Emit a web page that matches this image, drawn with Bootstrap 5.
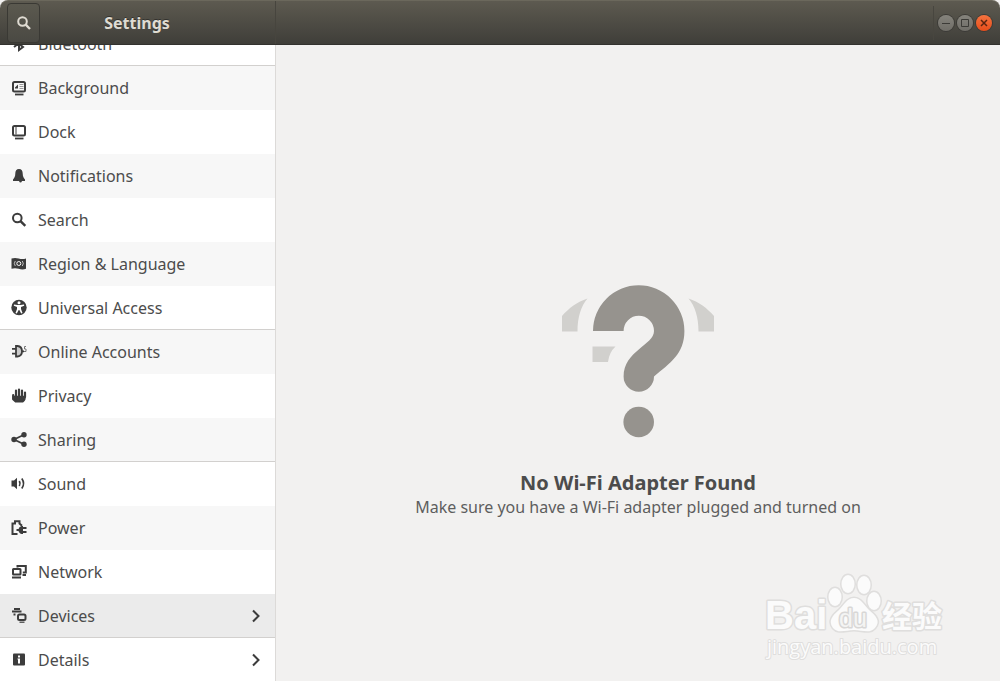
<!DOCTYPE html>
<html lang="en">
<head>
<meta charset="utf-8">
<meta name="viewport" content="width=device-width, initial-scale=1">
<title>Settings</title>
<link href="https://cdn.jsdelivr.net/npm/bootstrap@5.3.0/dist/css/bootstrap.min.css" rel="stylesheet">
<style>
body { font-family: "Noto Sans", "Open Sans", sans-serif; font-size: 16px; background: #f2f1f0; color: #4c4c4c; }
.titlebar { height: 45px; background: linear-gradient(#5d5a50, #3f3e39); border-top: 1px solid #6b685c; border-bottom: 1px solid #33322e; border-radius: 8px 8px 0 0; }
.titlebar-side { width: 276px; border-right: 1px solid #47453e; }
.titlebar h1 { font-size: 16px; line-height: 24px; font-weight: 700; color: #dfdbd2; text-shadow: 0 -1px #33322e; }
.find-btn { width: 33px; height: 40px; margin-left: 7px; border: 1px solid #3a3934; border-radius: 4px; background: linear-gradient(#5b594f, #4a4943); color: #dfdbd2; }
.title-space { margin-right: 41px; }
.win-controls { height: 34px; gap: 3px; border-left: 1px solid #48463f; }
.win-btn { width: 16px; height: 16px; border-radius: 50%; border: 0; background: linear-gradient(#85837c, #6f6d67); box-shadow: 0 0 0 1px #3c3b37; color: #3c3b37; }
.win-close { background: linear-gradient(#f5733f, #e64d1b); color: #5a2411; }
.sidebar { width: 276px; background: #fff; border-right: 1px solid #dcdad8; }
.side-list { margin-top: -23px; }
.side-item { height: 44px; padding: 0 13px 0 10px; gap: 10px; color: #4c4c4c; font-size: 16px; line-height: 24px; text-decoration: none; border-bottom: 1px solid transparent; }
.side-item svg { color: #3c3c3c; }
.side-item.shade { background: #f7f7f7; }
.side-item.selected { background: #ebebeb; }
.side-item.rule { border-bottom-color: #d2d0ce; }
.empty-state { padding-top: 78px; }
.empty-state h2 { font-size: 20px; line-height: 24px; font-weight: 700; margin-top: 33px; color: #4c4c4c; }
.empty-state p { line-height: 24px; color: #5e5e5e; }
.watermark { right: 48px; bottom: 14px; }
</style>
</head>
<body class="vh-100 d-flex flex-column overflow-hidden">
<header class="titlebar d-flex align-items-center flex-shrink-0">
  <div class="titlebar-side h-100 d-flex align-items-center">
    <button class="find-btn p-0 d-flex align-items-center justify-content-center" type="button" aria-label="Search">
      <svg width="16" height="16" viewBox="0 0 16 16" fill="none" stroke="currentColor" stroke-width="2"><circle cx="6.5" cy="6.5" r="4.3"/><path d="M9.7 9.7 14 14" stroke-width="2.4"/></svg>
    </button>
    <h1 class="title-space flex-grow-1 text-center mb-0">Settings</h1>
  </div>
  <div class="win-controls ms-auto d-flex align-items-center ps-1 pe-2">
    <button class="win-btn p-0 d-flex" type="button" aria-label="Minimize"><svg width="16" height="16" viewBox="0 0 16 16" stroke="currentColor"><path d="M4 8.5h8"/></svg></button>
    <button class="win-btn p-0 d-flex" type="button" aria-label="Maximize"><svg width="16" height="16" viewBox="0 0 16 16" fill="none" stroke="currentColor"><path d="M4.500 4.500h7v7h-7z"/></svg></button>
    <button class="win-btn win-close p-0 d-flex" type="button" aria-label="Close"><svg width="16" height="16" viewBox="0 0 16 16" stroke="currentColor" stroke-width="1.500"><path d="m5 5 6 6m0-6-6 6"/></svg></button>
  </div>
</header>
<div class="d-flex flex-grow-1 overflow-hidden">
  <nav class="sidebar flex-shrink-0 overflow-hidden" aria-label="Settings panels">
    <div class="side-list d-flex flex-column">
      <a href="#" class="side-item rule d-flex align-items-center"><svg width="18" height="18" viewBox="0 0 18 18" fill="none" stroke="currentColor" stroke-width="2"><path d="m4 5 9 7-4 3V2l4 3-9 7"/></svg>Bluetooth</a>
      <a href="#" class="side-item shade d-flex align-items-center"><svg width="18" height="18" viewBox="0 0 18 18" fill="none" stroke="currentColor"><rect x="3" y="3" width="12" height="9.500" rx="1.500" stroke-width="2"/><path d="M5 15.500h8.500" stroke-width="1.800"/><path d="M9.500 5.500h4m-4 2h4m-4 2h4" stroke="#999"/><path d="M5 8.500 8 5.500v4H5z" fill="currentColor" stroke="none"/></svg>Background</a>
      <a href="#" class="side-item d-flex align-items-center"><svg width="18" height="18" viewBox="0 0 18 18" fill="none" stroke="currentColor"><rect x="3" y="3" width="12" height="9.500" rx="1.500" stroke-width="2"/><path d="M5 15.500h8.500" stroke-width="1.800"/><path d="M6 4v7.500"/></svg>Dock</a>
      <a href="#" class="side-item shade d-flex align-items-center"><svg width="18" height="18" viewBox="0 0 18 18" fill="currentColor"><path d="M9 2c-2.600 0-3.700 2-3.700 4.500C5.300 10 4 11 3 12.500V14h12v-1.500c-1-1.500-2.300-2.500-2.300-6C12.700 4 11.600 2 9 2z"/><path d="M9 14h3q-.5 1.500-1.500 1.500T9 14z"/></svg>Notifications</a>
      <a href="#" class="side-item d-flex align-items-center"><svg width="18" height="18" viewBox="0 0 18 18" fill="none" stroke="currentColor" stroke-width="2"><circle cx="7.300" cy="7" r="4.300"/><path d="m10.500 10.200 4.800 4.600" stroke-width="2.500"/></svg>Search</a>
      <a href="#" class="side-item shade d-flex align-items-center"><svg width="18" height="18" viewBox="0 0 18 18" fill="currentColor"><path d="M1.500 3.500q3.500-1.200 7.200 0t7.300 0v10.300q-3.500 1.200-7.300 0t-7.200 0z"/><g fill="none" stroke="#f7f7f7"><circle cx="8.800" cy="8.500" r="2"/><path d="M5.300 6q-2 2.500 0 5m7-5q2 2.500 0 5" stroke-width=".7"/></g></svg>Region &amp; Language</a>
      <a href="#" class="side-item rule d-flex align-items-center"><svg width="18" height="18" viewBox="0 0 18 18"><circle cx="9" cy="8.500" r="7.700" fill="currentColor"/><circle cx="9" cy="3.700" r="1.500" fill="#fff"/><path d="m4 5.500 3.500.6h3l3.500-.6.200 1.300-3.200 1.200v2l1.500 4-1.300.6L9.300 11h-.6l-1.900 3.600-1.300-.6L7 10V8L3.800 6.800z" fill="#fff"/></svg>Universal Access</a>
      <a href="#" class="side-item shade d-flex align-items-center"><svg width="18" height="18" viewBox="0 0 18 18" fill="none" stroke="currentColor"><path d="M6 3h1.500q4.500.5 4.500 5.300t-4.500 5.200H6z" fill="#ccc" stroke-width="1.800"/><path d="M2 5.800h4M2 10.700h4M12 8.300h2" stroke-width="1.800"/><path d="M16 3.500h-1.500V6H16v2.500h-2" stroke="#777"/></svg>Online Accounts</a>
      <a href="#" class="side-item d-flex align-items-center"><svg width="18" height="18" viewBox="0 0 18 18" fill="none" stroke="currentColor" stroke-width="2.200" stroke-linecap="round"><path d="M6 3.500V9M9 2.500V9m3-5.500V9m3-3.500V10M3.200 8v4"/><path d="M3.200 9.500h11.700V12q-1 2.500-2 2.700H5.500l-2.300-2z" fill="currentColor" stroke-width="1.500"/></svg>Privacy</a>
      <a href="#" class="side-item shade rule d-flex align-items-center"><svg width="18" height="18" viewBox="0 0 18 18" fill="currentColor"><circle cx="4" cy="8.500" r="2.700"/><circle cx="14" cy="3.700" r="2.700"/><circle cx="14" cy="13.300" r="2.700"/><path d="m14 3.700-10 4.800 10 4.800" fill="none" stroke="currentColor" stroke-width="1.800"/></svg>Sharing</a>
      <a href="#" class="side-item d-flex align-items-center"><svg width="18" height="18" viewBox="0 0 18 18" fill="currentColor"><path d="M1.500 5.500H4l3-2.800v11.600l-3-2.800H1.500z"/><path d="M9.300 6q1.500 2.500 0 5m2.500-7.500q3.500 5 0 10" fill="none" stroke="currentColor" stroke-width="1.700"/></svg>Sound</a>
      <a href="#" class="side-item shade d-flex align-items-center"><svg width="18" height="18" viewBox="0 0 18 18" fill="none" stroke="currentColor" stroke-width="2"><path d="M7.500 15h-5V4.500H5V2.300h4.500v2.200l2.500 2.200"/><path d="M13 7v8h-1.500Q8.500 14 8.500 11t3-4z" fill="currentColor" stroke="none"/><path d="M6.500 11H10m2-2h4.500M12 13h4.500" stroke-width="1.800"/></svg>Power</a>
      <a href="#" class="side-item d-flex align-items-center"><svg width="18" height="18" viewBox="0 0 18 18" fill="none" stroke="currentColor" stroke-width="2"><path d="M7.500 4.500V3h8.300v6.500h-3"/><rect x="3" y="6" width="7.500" height="5.500" rx=".5"/><path d="M2 14.500h9M12.500 12h3.500" stroke-width="1.800"/></svg>Network</a>
      <a href="#" class="side-item selected rule d-flex align-items-center" aria-current="page"><svg width="18" height="18" viewBox="0 0 18 18" fill="none" stroke="currentColor"><path d="M4 2h6M2 4.500h9.500" stroke-width="1.800"/><path d="M3.500 7.500h2" stroke-width="2"/><rect x="8" y="7.500" width="7.500" height="5.500" rx="1.500" stroke-width="2"/><path d="M9.500 15.200h5" stroke-width="1.200"/></svg>Devices<svg class="ms-auto" width="12" height="16" viewBox="0 0 12 16" fill="none" stroke="currentColor" stroke-width="2"><path d="m3 2.500 5.500 5.500L3 13.500"/></svg></a>
      <a href="#" class="side-item d-flex align-items-center"><svg width="18" height="18" viewBox="0 0 18 18"><rect x="3" y="2.500" width="12" height="12" rx="1" fill="currentColor"/><path d="M8 4.500h2v2H8zM7.500 7.500H10v5H8v-4h-.500z" fill="#fff"/></svg>Details<svg class="ms-auto" width="12" height="16" viewBox="0 0 12 16" fill="none" stroke="currentColor" stroke-width="2"><path d="m3 2.500 5.500 5.500L3 13.500"/></svg></a>
    </div>
  </nav>
  <main class="flex-grow-1 position-relative d-flex">
    <section class="empty-state flex-grow-1 d-flex flex-column align-items-center justify-content-center text-center">
      <svg width="153" height="153" viewBox="0 0 153 153" aria-hidden="true">
        <g fill="#d1d0cd"><path d="M0 31v15.500h15.500C15.500 32 19 21 25.500 13.500 15 17 7 23 0 31z"/><path d="M152 31v15.500h-15.500C136.500 32 133 21 126.500 13.500 137 17 145 23 152 31z"/><path d="M30.500 61.500h23q-6.500 6-7.500 15.500H30.500z"/></g>
        <g fill="#96938e"><path d="M31 46a45.700 45.700 0 0 1 91.400 0C122.400 69 108 78 92 91.500a15.200 15.200 0 0 1-30.400 0C61.600 66 92 60 92 46a15.200 15.200 0 0 0-30.400 0z"/><circle cx="76.700" cy="137" r="15.300"/></g>
      </svg>
      <h2 class="mb-0">No Wi-Fi Adapter Found</h2>
      <p class="mb-0">Make sure you have a Wi-Fi adapter plugged and turned on</p>
    </section>
    <svg class="watermark position-absolute" width="190" height="100" viewBox="0 0 190 100" fill="#fbfbfb" stroke="#dfdedd" stroke-width="3" paint-order="stroke" stroke-linejoin="round">
      <text x="3" y="62" font-family="Liberation Sans, Arial, sans-serif" font-weight="700" font-size="40">Bai</text>
      <ellipse cx="73" cy="30" rx="6.500" ry="9"/><ellipse cx="86" cy="17" rx="6.500" ry="9"/><ellipse cx="102" cy="18" rx="6.500" ry="9"/><ellipse cx="112" cy="34" rx="6.500" ry="9"/>
      <path d="M92 31c7 0 10 7 15 12 7 6 12 11 6 18-5 6-13 2-21 2s-16 4-21-2c-5-7-1-12 6-18 5-5 8-12 15-12z"/>
      <text x="77" y="60" font-family="Liberation Sans, Arial, sans-serif" font-size="25" fill="#f4f4f3" stroke="#d8d7d6">du</text>
      <text x="120" y="60" font-family="Noto Sans CJK SC, sans-serif" font-size="30" font-weight="700">经验</text>
      <text x="5" y="87" font-family="Open Sans, sans-serif" font-size="20" stroke-width="2">jingyan.baidu.com</text>
    </svg>
  </main>
</div>
<script src="https://cdn.jsdelivr.net/npm/bootstrap@5.3.0/dist/js/bootstrap.bundle.min.js"></script>
</body>
</html>
